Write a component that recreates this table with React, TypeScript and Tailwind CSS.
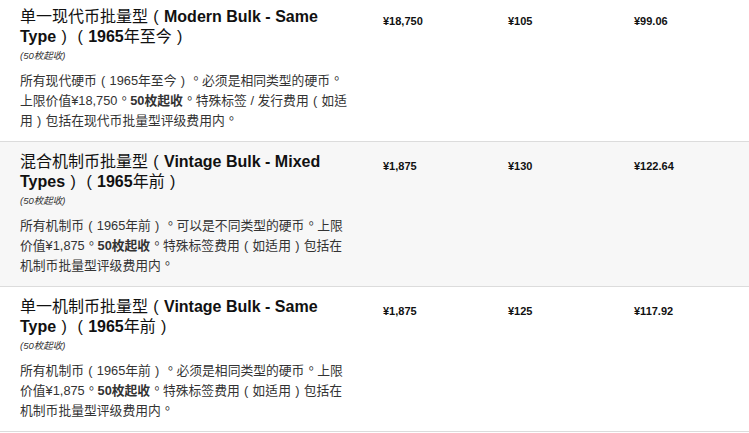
import React from 'react';

type Row = {
  title: React.ReactNode;
  desc: React.ReactNode;
  value: string;
  fee: string;
  perCoin: string;
  shaded?: boolean;
};

// full-width brackets drawn centred in a 1em cell, like the reference font
const P = ({ c }: { c: '(' | ')' }) => (
  <span className="inline-block w-[1em] text-center font-normal">{c}</span>
);

// centred full stop (the reference font sets 。 in the middle of its cell)
const D = () => <span className="inline-block translate-x-[0.02em] -translate-y-[0.18em]">。</span>;

const N = ({ children }: { children: React.ReactNode }) => (
  <span className="font-normal">{children}</span>
);

const rows: Row[] = [
  {
    title: (
      <>
        <N>单一现代币批量型</N><P c="(" />Modern Bulk - Same Type<P c=")" /><P c="(" />1965<N>年至今</N><P c=")" />
      </>
    ),
    desc: (
      <>
        所有现代硬币<P c="(" />1965年至今<P c=")" /><D />必须是相同类型的硬币<D />上限价值¥18,750<D /><b>50枚起收</b><D />特殊标签 / 发行费用<P c="(" />如适用<P c=")" />包括在现代币批量型评级费用内<D />
      </>
    ),
    value: '¥18,750',
    fee: '¥105',
    perCoin: '¥99.06',
  },
  {
    title: (
      <>
        <N>混合机制币批量型</N><P c="(" />Vintage Bulk - Mixed Types<P c=")" /><P c="(" />1965<N>年前</N><P c=")" />
      </>
    ),
    desc: (
      <>
        所有机制币<P c="(" />1965年前<P c=")" /><D />可以是不同类型的硬币<D />上限价值¥1,875<D /><b>50枚起收</b><D />特殊标签费用<P c="(" />如适用<P c=")" />包括在机制币批量型评级费用内<D />
      </>
    ),
    value: '¥1,875',
    fee: '¥130',
    perCoin: '¥122.64',
    shaded: true,
  },
  {
    title: (
      <>
        <N>单一机制币批量型</N><P c="(" />Vintage Bulk - Same Type<P c=")" /><P c="(" />1965<N>年前</N><P c=")" />
      </>
    ),
    desc: (
      <>
        所有机制币<P c="(" />1965年前<P c=")" /><D />必须是相同类型的硬币<D />上限价值¥1,875<D /><b>50枚起收</b><D />特殊标签费用<P c="(" />如适用<P c=")" />包括在机制币批量型评级费用内<D />
      </>
    ),
    value: '¥1,875',
    fee: '¥125',
    perCoin: '¥117.92',
  },
];

export default function App() {
  return (
    <div
      className="w-[749px] h-[433px] overflow-hidden bg-white text-[#222] [text-spacing-trim:space-all]"
      style={{ fontFamily: '"Liberation Sans", "Noto Sans CJK TC", sans-serif' }}
    >
      <div className="-mt-[3px]">
        {rows.map((r, i) => (
          <div
            key={i}
            className={`grid grid-cols-[370px_125px_126px_128px] border-b border-[#dcdcdc] ${
              r.shaded ? 'bg-[#f7f7f7]' : 'bg-white'
            }`}
          >
            <div className="px-5 pt-[10px] pb-[10px]">
              <h3 className="text-[16px] leading-[20px] font-bold text-[#111]">{r.title}</h3>
              <p className="mt-[2px] text-[9.5px] leading-[14px] italic text-[#333]">(50枚起收)</p>
              <p className="mt-[8px] text-[12.8px] leading-[20px] text-[#333]">{r.desc}</p>
            </div>
            <div className="pl-[13px] pt-4 text-[11px] leading-[16px] font-bold text-[#111]">{r.value}</div>
            <div className="pl-[13px] pt-4 text-[11px] leading-[16px] font-bold text-[#111]">{r.fee}</div>
            <div className="pl-[13px] pt-4 text-[11px] leading-[16px] font-bold text-[#111]">{r.perCoin}</div>
          </div>
        ))}
      </div>
    </div>
  );
}
